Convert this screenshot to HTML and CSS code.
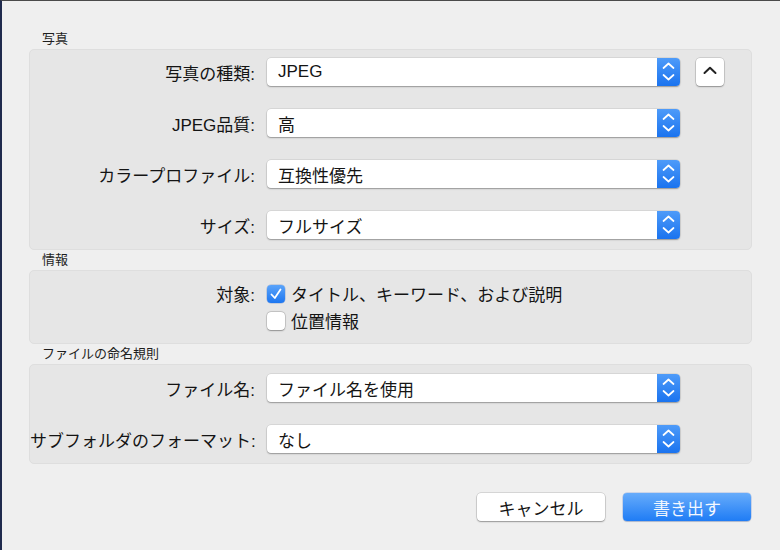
FILE: index.html
```html
<!DOCTYPE html>
<html lang="ja">
<head>
<meta charset="utf-8">
<link rel="stylesheet" href="styles.css">
</head>
<body>
<div class="window">
  <div class="section-title first">写真</div>
  <div class="panel panel-photo">
    <div class="row">
      <span class="lbl">写真の種類:</span>
      <div class="popup"><span class="val">JPEG</span><span class="stepper"><svg width="23" height="28" viewBox="0 0 23 28"><path d="M6.5 10 L11.5 5.5 L16.5 10 M6.5 17 L11.5 21.5 L16.5 17" fill="none" stroke="#fff" stroke-width="1.7" stroke-linecap="round" stroke-linejoin="round"/></svg></span></div>
      <button class="disclosure"><svg width="28" height="28" viewBox="0 0 28 28"><path d="M8.5 15 L14 9.8 L19.5 15" fill="none" stroke="#222" stroke-width="2" stroke-linecap="round" stroke-linejoin="round"/></svg></button>
    </div>
    <div class="row">
      <span class="lbl">JPEG品質:</span>
      <div class="popup"><span class="val">高</span><span class="stepper"><svg width="23" height="28" viewBox="0 0 23 28"><path d="M6.5 10 L11.5 5.5 L16.5 10 M6.5 17 L11.5 21.5 L16.5 17" fill="none" stroke="#fff" stroke-width="1.7" stroke-linecap="round" stroke-linejoin="round"/></svg></span></div>
    </div>
    <div class="row">
      <span class="lbl">カラープロファイル:</span>
      <div class="popup"><span class="val">互換性優先</span><span class="stepper"><svg width="23" height="28" viewBox="0 0 23 28"><path d="M6.5 10 L11.5 5.5 L16.5 10 M6.5 17 L11.5 21.5 L16.5 17" fill="none" stroke="#fff" stroke-width="1.7" stroke-linecap="round" stroke-linejoin="round"/></svg></span></div>
    </div>
    <div class="row">
      <span class="lbl">サイズ:</span>
      <div class="popup"><span class="val">フルサイズ</span><span class="stepper"><svg width="23" height="28" viewBox="0 0 23 28"><path d="M6.5 10 L11.5 5.5 L16.5 10 M6.5 17 L11.5 21.5 L16.5 17" fill="none" stroke="#fff" stroke-width="1.7" stroke-linecap="round" stroke-linejoin="round"/></svg></span></div>
    </div>
  </div>

  <div class="section-title">情報</div>
  <div class="panel panel-info">
    <div class="crow">
      <span class="lbl">対象:</span>
      <span class="check on"><svg width="18" height="18" viewBox="0 0 18 18"><path d="M4.5 9.5 L7.8 13 L13.5 4.5" fill="none" stroke="#fff" stroke-width="1.8" stroke-linecap="round" stroke-linejoin="round"/></svg></span>
      <span class="ctext">タイトル、キーワード、および説明</span>
    </div>
    <div class="crow">
      <span class="lbl"></span>
      <span class="check"></span>
      <span class="ctext">位置情報</span>
    </div>
  </div>

  <div class="section-title">ファイルの命名規則</div>
  <div class="panel panel-name">
    <div class="row">
      <span class="lbl">ファイル名:</span>
      <div class="popup"><span class="val">ファイル名を使用</span><span class="stepper"><svg width="23" height="28" viewBox="0 0 23 28"><path d="M6.5 10 L11.5 5.5 L16.5 10 M6.5 17 L11.5 21.5 L16.5 17" fill="none" stroke="#fff" stroke-width="1.7" stroke-linecap="round" stroke-linejoin="round"/></svg></span></div>
    </div>
    <div class="row">
      <span class="lbl">サブフォルダのフォーマット:</span>
      <div class="popup"><span class="val">なし</span><span class="stepper"><svg width="23" height="28" viewBox="0 0 23 28"><path d="M6.5 10 L11.5 5.5 L16.5 10 M6.5 17 L11.5 21.5 L16.5 17" fill="none" stroke="#fff" stroke-width="1.7" stroke-linecap="round" stroke-linejoin="round"/></svg></span></div>
    </div>
  </div>

  <div class="footer">
    <button class="btn">キャンセル</button>
    <button class="btn primary">書き出す</button>
  </div>
</div>
</body>
</html>
```

FILE: styles.css
```css
* { box-sizing: border-box; }
html, body { margin: 0; padding: 0; }
body {
  width: 780px;
  height: 550px;
  overflow: hidden;
  background: #efefef;
  font-family: "Liberation Sans", "Noto Sans CJK JP", sans-serif;
  color: #141414;
}
.window {
  width: 780px;
  height: 550px;
  background: #efefef;
  border-top: 1px solid #4a4a4a;
  border-left: 2px solid #1f2a4d;
  padding: 0 28px 0 27px;
  display: flex;
  flex-direction: column;
}
.section-title {
  height: 20px;
  line-height: 20px;
  font-size: 13px;
  padding-left: 13px;
  color: #1e1e1e;
}
.section-title.first {
  margin-top: 28px;
}
.panel {
  background: #e6e6e6;
  border: 1px solid #dedede;
  border-radius: 5px;
  display: flex;
  flex-direction: column;
}
.panel-photo {
  height: 201px;
  padding-top: 8px;
  gap: 23px;
}
.panel-info {
  height: 74px;
  padding-top: 9px;
}
.panel-name {
  height: 100px;
  padding-top: 9px;
  gap: 23px;
}
.row {
  display: flex;
  align-items: center;
  height: 28px;
}
.lbl {
  width: 225px;
  flex: none;
  text-align: right;
  font-size: 17px;
  white-space: nowrap;
}
.popup {
  margin-left: 12px;
  width: 413px;
  height: 28px;
  background: #fff;
  border-radius: 4px;
  box-shadow: 0 0 0 0.5px rgba(0,0,0,0.12), 0 1px 1.5px rgba(0,0,0,0.3);
  display: flex;
  align-items: center;
}
.val {
  flex: 1;
  padding-left: 11px;
  font-size: 17px;
  white-space: nowrap;
}
.stepper {
  width: 23px;
  height: 28px;
  flex: none;
  border-radius: 0 4px 4px 0;
  background: linear-gradient(#4e9bf9, #1a73ef);
  display: flex;
}
.disclosure {
  margin-left: 16px;
  width: 28px;
  height: 28px;
  padding: 0;
  border: none;
  border-radius: 4px;
  background: #fff;
  box-shadow: 0 0 0 0.5px rgba(0,0,0,0.2), 0 1px 1.5px rgba(0,0,0,0.3);
  display: flex;
}
.crow {
  display: flex;
  align-items: center;
  height: 27px;
}
.check {
  margin-left: 12px;
  width: 18px;
  height: 18px;
  flex: none;
  border-radius: 4px;
  background: #fff;
  box-shadow: 0 0 0 0.5px rgba(0,0,0,0.2), 0 0.5px 1.5px rgba(0,0,0,0.3);
  display: flex;
}
.check.on {
  background: linear-gradient(#5aa3fa, #1d76f0);
  box-shadow: 0 0 0 0.5px rgba(0,60,160,0.3);
}
.ctext {
  margin-left: 6px;
  font-size: 17px;
  white-space: nowrap;
}
.footer {
  margin-top: 29px;
  display: flex;
  justify-content: flex-end;
  gap: 18px;
  padding-right: 1px;
}
.btn {
  width: 128px;
  height: 28px;
  padding: 0;
  border: none;
  border-radius: 4px;
  background: #fff;
  box-shadow: 0 0 0 0.5px rgba(0,0,0,0.2), 0 1px 1.5px rgba(0,0,0,0.3);
  font-family: "Liberation Sans", "Noto Sans CJK JP", sans-serif;
  font-size: 17px;
  color: #141414;
}
.btn.primary {
  background: linear-gradient(#67acfb, #1f7cf5);
  box-shadow: 0 0 0 0.5px rgba(0,70,200,0.3), 0 1px 1px rgba(0,0,0,0.15);
  color: #f4f8ff;
}
```
